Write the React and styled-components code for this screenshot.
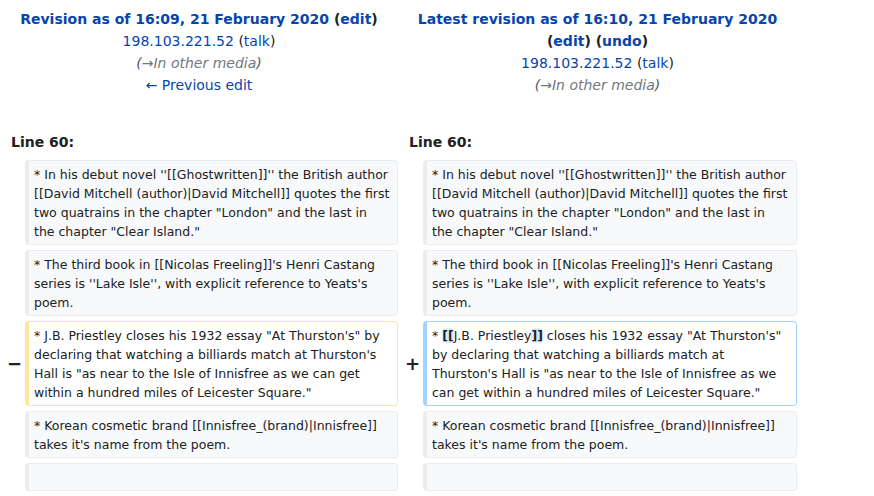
import React from "react";
import styled, { createGlobalStyle, css } from "styled-components";

const Global = createGlobalStyle`
  html, body { margin: 0; padding: 0; background: #fff; }
  body { font-family: "DejaVu Sans", sans-serif; color: #202122; }
`;

const Table = styled.div`
  display: grid;
  grid-template-columns: 25px 373px 25px 374px;
  column-gap: 0;
  padding-top: 8px;
  width: 797px;
`;

const Header = styled.div`
  grid-column: span 2;
  text-align: center;
  font-size: 14px;
  line-height: 22px;
  padding: 0 4px;
`;

const HeaderTitle = styled.div`
  font-weight: bold;
`;

const Link = styled.a`
  color: #0645ad;
  text-decoration: none;
`;

const Paren = styled.span`
  color: #202122;
`;

const Comment = styled.div`
  font-style: italic;
  color: #54595d;
`;

const CommentLink = styled.span`
  color: #72777d;
`;

const LineNo = styled.div`
  grid-column: span 2;
  font-weight: bold;
  font-size: 14px;
  line-height: 22px;
  padding: 0 0 0 11px;
  margin-top: ${(p) => p.$top}px;
  margin-bottom: 7px;
`;

const Marker = styled.div`
  display: flex;
  align-items: center;
  justify-content: flex-end;
  font-weight: bold;
  font-size: 18px;
  padding-right: 3px;
  margin-bottom: 5px;
`;

const variants = {
  context: css`
    background: #f8f9fa;
    border-color: #eaecf0;
  `,
  deleted: css`
    background: #fff;
    border-color: #ffe49c;
  `,
  added: css`
    background: #fff;
    border-color: #a3d3ff;
  `,
};

const Cell = styled.div`
  box-sizing: border-box;
  font-size: 12.5px;
  line-height: 19px;
  min-height: 28px;
  padding: 4px 7px 3px 5px;
  border-style: solid;
  border-width: 1px 1px 1px 4px;
  border-radius: 4px;
  margin-bottom: 5px;
  color: #202122;
  word-wrap: break-word;
  ${(p) => variants[p.$kind]}
`;

const Ins = styled.ins`
  text-decoration: none;
  font-weight: bold;
  background: #d8ecff;
  border-radius: 4px;
`;

const rowsBefore = [
  `* In his debut novel ''[[Ghostwritten]]'' the British author [[David Mitchell (author)|David Mitchell]] quotes the first two quatrains in the chapter "London" and the last in the chapter "Clear Island."`,
  `* The third book in [[Nicolas Freeling]]'s Henri Castang series is ''Lake Isle'', with explicit reference to Yeats's poem.`,
];
const rowsAfter = [
  `* Korean cosmetic brand [[Innisfree_(brand)|Innisfree]] takes it's name from the poem.`,
  ``,
];

function ContextRow({ text }) {
  return (
    <>
      <Marker />
      <Cell $kind="context">{text}</Cell>
      <Marker />
      <Cell $kind="context">{text}</Cell>
    </>
  );
}

export default function App() {
  return (
    <>
      <Global />
      <Table>
        <Header>
          <HeaderTitle>
            <Link>Revision as of 16:09, 21 February 2020</Link> <Paren>(</Paren>
            <Link>edit</Link>
            <Paren>)</Paren>
          </HeaderTitle>
          <div>
            <Link>198.103.221.52</Link> <Paren>(</Paren>
            <Link>talk</Link>
            <Paren>)</Paren>
          </div>
          <Comment>
            (<CommentLink>→In other media</CommentLink>)
          </Comment>
          <div>
            <Link>← Previous edit</Link>
          </div>
        </Header>
        <Header>
          <HeaderTitle>
            <Link>Latest revision as of 16:10, 21 February 2020</Link>
          </HeaderTitle>
          <HeaderTitle>
            <Paren>(</Paren>
            <Link>edit</Link>
            <Paren>)</Paren> <Paren>(</Paren>
            <Link>undo</Link>
            <Paren>)</Paren>
          </HeaderTitle>
          <div>
            <Link>198.103.221.52</Link> <Paren>(</Paren>
            <Link>talk</Link>
            <Paren>)</Paren>
          </div>
          <Comment>
            (<CommentLink>→In other media</CommentLink>)
          </Comment>
        </Header>

        <LineNo $top={35}>Line 60:</LineNo>
        <LineNo $top={35}>Line 60:</LineNo>

        {rowsBefore.map((t, i) => (
          <ContextRow key={"b" + i} text={t} />
        ))}

        <Marker>−</Marker>
        <Cell $kind="deleted">
          * J.B. Priestley closes his 1932 essay "At Thurston's" by declaring
          that watching a billiards match at Thurston's Hall is "as near to the
          Isle of Innisfree as we can get within a hundred miles of Leicester
          Square."
        </Cell>
        <Marker>+</Marker>
        <Cell $kind="added">
          * <Ins>[[</Ins>J.B. Priestley<Ins>]]</Ins> closes his 1932 essay "At
          Thurston's" by declaring that watching a billiards match at
          Thurston's Hall is "as near to the Isle of Innisfree as we can get
          within a hundred miles of Leicester Square."
        </Cell>

        {rowsAfter.map((t, i) => (
          <ContextRow key={"a" + i} text={t} />
        ))}
      </Table>
    </>
  );
}
